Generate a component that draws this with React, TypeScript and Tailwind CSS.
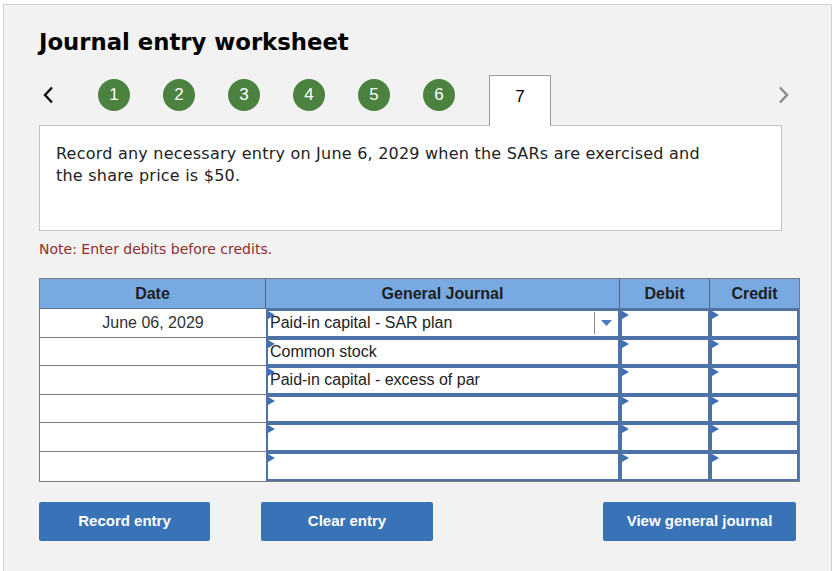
import React from "react";

const rows = [
  { date: "June 06, 2029", account: "Paid-in capital - SAR plan", select: true },
  { date: "", account: "Common stock" },
  { date: "", account: "Paid-in capital - excess of par" },
  { date: "", account: "" },
  { date: "", account: "" },
  { date: "", account: "" },
];

function Marker() {
  return (
    <svg className="absolute left-0 top-0" width="7" height="8" viewBox="0 0 7 8">
      <path d="M0 0 L7 4 L0 8 Z" fill="#3d6fb6" />
    </svg>
  );
}

function Cell({ width, children }: { width: string; children?: React.ReactNode }) {
  return (
    <div className={`${width} relative h-full border-2 border-[#4d72a8] bg-white flex items-center`}>
      <Marker />
      {children}
    </div>
  );
}

function Chevron({ dir, color }: { dir: "left" | "right"; color: string }) {
  return (
    <svg width="12" height="18" viewBox="0 0 12 18" fill="none">
      <path
        d={dir === "left" ? "M10 1.5 L3 9 L10 16.5" : "M2 1.5 L9 9 L2 16.5"}
        stroke={color}
        strokeWidth="2.4"
      />
    </svg>
  );
}

export default function App() {
  return (
    <div className="w-[837px] h-[571px] overflow-hidden bg-white">
      <div className="ml-[3px] mt-[4px] w-[829px] h-[600px] border border-[#d2d2d2] bg-[#f2f2f2] pl-[35px] pt-[24px]">
        <h1 className="text-[22.75px] leading-[27px] font-bold text-black font-['DejaVu_Sans',sans-serif]">
          Journal entry worksheet
        </h1>

        {/* step navigation */}
        <div className="mt-[19px] w-[761px] h-[50px] flex items-start font-['Liberation_Sans',Arial,sans-serif]">
          <div className="w-[18px] mt-[11px] flex justify-center">
            <Chevron dir="left" color="#111" />
          </div>
          <div className="ml-[41px] mt-[4px] flex gap-[33px]">
            {[1, 2, 3, 4, 5, 6].map((n) => (
              <div
                key={n}
                className="w-[32px] h-[32px] rounded-full bg-[#4b823f] text-white text-[17px] flex items-center justify-center"
              >
                {n}
              </div>
            ))}
          </div>
          <div className="relative z-10 ml-[34px] w-[62px] h-[51px] border border-b-0 border-[#9a9a9a] bg-white flex justify-center pt-[8px] text-[17px] text-black">
            7
          </div>
          <div className="ml-auto mr-[10px] mt-[11px]">
            <Chevron dir="right" color="#8a8a8a" />
          </div>
        </div>

        {/* prompt */}
        <div className="w-[743px] h-[106px] border border-[#c4c4c4] bg-white px-[16px] pt-[17px] text-[16px] tracking-[0.22px] leading-[22px] text-[#222] font-['DejaVu_Sans',sans-serif]">
          Record any necessary entry on June 6, 2029 when the SARs are exercised and
          <br />
          the share price is $50.
        </div>

        <p className="mt-[9px] text-[14px] leading-[18px] text-[#8e2e2e] font-['DejaVu_Sans',sans-serif]">
          Note: Enter debits before credits.
        </p>

        {/* journal table */}
        <div className="mt-[20px] w-[761px] border border-[#7a7a7a] font-['Liberation_Sans',Arial,sans-serif] text-[16px]">
          <div className="flex h-[30px] bg-[#78a9e1] font-bold text-[#1e1e1e] border-b border-[#5a7395]">
            <div className="w-[226px] flex items-center justify-center border-r border-[#4d6688]">Date</div>
            <div className="w-[354px] flex items-center justify-center border-r border-[#4d6688]">General Journal</div>
            <div className="w-[90px] flex items-center justify-center border-r border-[#4d6688]">Debit</div>
            <div className="flex-1 flex items-center justify-center">Credit</div>
          </div>
          {rows.map((r, i) => (
            <div key={i} className="flex h-[28.6px]">
              <div
                className={`w-[226px] bg-white flex items-center justify-center text-[#333] ${
                  i < rows.length - 1 ? "border-b border-[#7a7a7a]" : ""
                }`}
              >
                {r.date}
              </div>
              <Cell width="w-[354px]">
                <span className="pl-[2px] text-[#222] flex-1 whitespace-nowrap">{r.account}</span>
                {r.select && (
                  <div className="h-[22px] w-[24px] border-l border-[#888] flex items-center justify-center">
                    <svg width="11" height="6" viewBox="0 0 11 6">
                      <path d="M0 0 L11 0 L5.5 6 Z" fill="#4a7bbd" />
                    </svg>
                  </div>
                )}
              </Cell>
              <Cell width="w-[90px]" />
              <Cell width="flex-1" />
            </div>
          ))}
        </div>

        {/* actions */}
        <div className="mt-[20px] w-[761px] flex font-['Liberation_Sans',Arial,sans-serif] text-[15px] font-bold text-white">
          <button className="w-[171px] h-[39px] rounded-[2px] bg-[#3873b8]">Record entry</button>
          <button className="ml-[51px] w-[172px] h-[39px] rounded-[2px] bg-[#3873b8]">Clear entry</button>
          <button className="ml-auto mr-[4px] w-[193px] h-[39px] rounded-[2px] bg-[#3873b8]">
            View general journal
          </button>
        </div>
      </div>
    </div>
  );
}
